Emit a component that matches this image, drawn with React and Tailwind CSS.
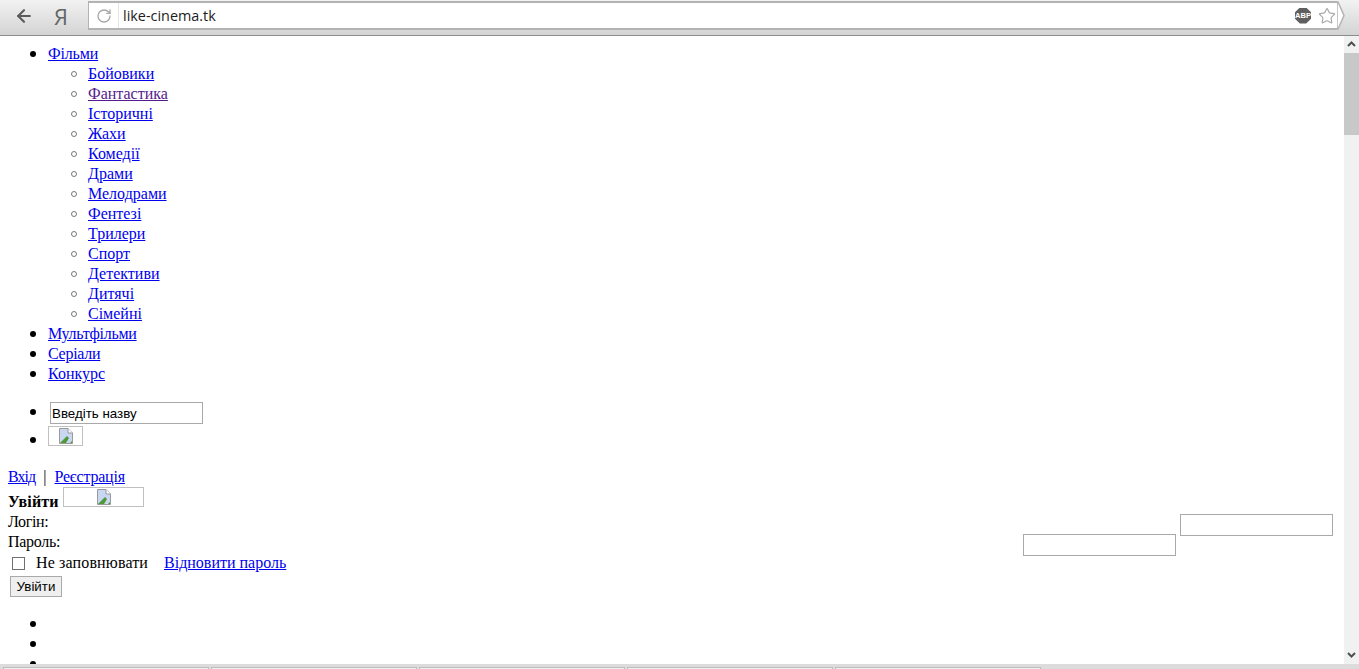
import { ArrowLeft, RotateCw, Star } from "lucide-react";

const genres = ["Бойовики", "Фантастика", "Історичні", "Жахи", "Комедії", "Драми", "Мелодрами", "Фентезі", "Трилери", "Спорт", "Детективи", "Дитячі", "Сімейні"];

const disc = "relative list-none before:absolute before:left-[-18px] before:top-[7px] before:w-[6px] before:h-[6px] before:rounded-full before:bg-black";
const circle = "relative list-none before:absolute before:left-[-17px] before:top-[7px] before:w-[6px] before:h-[6px] before:rounded-full before:border before:border-[#777]";

function BrokenImage() {
  return (
    <svg width="16" height="16" viewBox="0 0 16 16" className="block">
      <path d="M1.5 .5H10L14.5 5V15.5H1.5Z" fill="#c9d7f3" stroke="#9a9a9a" />
      <path d="M10 .5V5H14.5" fill="#fff" stroke="#9a9a9a" />
      <path d="M2 15L9 8L11 10L8 15Z" fill="#4f9a37" />
      <path d="M12 15L14 13V15Z" fill="#4f9a37" />
    </svg>
  );
}

function Link({ children, className = "text-[#0000ee]" }) {
  return <a href="#" className={`underline ${className}`}>{children}</a>;
}

function Toolbar() {
  return (
    <div className="h-9 shrink-0 flex items-start pt-[1px] bg-gradient-to-b from-[#f2f2f2] to-[#d4d4d4] border-b border-[#8c8c8c]">
      <ArrowLeft className="ml-[14px] mt-[5px] w-[20px] h-[20px] text-[#5c5c5c]" strokeWidth={2.6} />
      <span className="ml-[20px] mt-[3px] w-[12px] font-['Open_Sans',sans-serif] text-[22px] leading-[24px] text-[#666]">Я</span>
      <div className="ml-[22px] w-[1249px] h-[29px] flex items-center bg-white border-y-2 border-[#b3b3b3] border-l">
        <div className="w-[30px] h-full flex items-center justify-center border-r border-[#e4e4e4]">
          <RotateCw className="w-[16px] h-[16px] text-[#a8a8a8]" strokeWidth={2} />
        </div>
        <span className="ml-[4px] font-['Open_Sans',sans-serif] text-[14.4px] text-[#1c1c1c]">like-cinema.tk</span>
        <div className="ml-auto mr-[1px] flex items-center gap-[7px]">
          <span className="w-[16px] h-[16px] [clip-path:polygon(30%_0,70%_0,100%_30%,100%_70%,70%_100%,30%_100%,0_70%,0_30%)] bg-[#5f5f5f] text-white text-[7.5px] font-bold text-center leading-[16px] font-['Liberation_Sans',sans-serif]">ABP</span>
          <Star className="w-[18px] h-[18px] text-[#a9a9a9]" strokeWidth={1.6} />
        </div>
      </div>
      <svg width="8" height="29" viewBox="0 0 8 29" className="block">
        <path d="M0 1H1L7 14.5L1 28H0Z" fill="#fff" stroke="#b3b3b3" strokeWidth="1.5" />
      </svg>
    </div>
  );
}

function Scrollbar() {
  return (
    <div className="w-[15px] shrink-0 flex flex-col items-center bg-[#f1f1f1] text-[#505050]">
      <svg width="15" height="17" viewBox="0 0 15 17"><path d="M4 10L7.5 6.5L11 10" fill="none" stroke="currentColor" strokeWidth="2" /></svg>
      <div className="w-full h-[82px] bg-[#c8c8c8]" />
      <svg width="15" height="17" viewBox="0 0 15 17" className="mt-auto"><path d="M4 6L7.5 9.5L11 6" fill="none" stroke="currentColor" strokeWidth="2" /></svg>
    </div>
  );
}

function Tabs() {
  return (
    <div className="h-[5px] shrink-0 flex gap-[2px] pt-[3px] pl-[3px] bg-[#dcdcdc] overflow-hidden">
      {[0, 1, 2, 3, 4].map((i) => (
        <div key={i} className="w-[206px] h-[8px] border border-[#bdbdbd] bg-[#efefef]" />
      ))}
    </div>
  );
}

export default function App() {
  return (
    <div className="h-[669px] flex flex-col overflow-hidden bg-white text-black text-[16px] leading-[20px] font-['Liberation_Serif',serif]">
      <Toolbar />
      <div className="flex-1 min-h-0 flex">
        <div className="flex-1 min-w-0 overflow-hidden pt-[8px] px-[8px]">
          <ul className="pl-[40px]">
            <li className={disc}>
              <Link className="text-[#0000ee] tracking-[-0.15px]">Фільми</Link>
              <ul className="pl-[40px]">
                {genres.map((g) => (
                  <li key={g} className={circle}>
                    <Link className={g === "Фантастика" ? "text-[#551a8b]" : "text-[#0000ee]"}>{g}</Link>
                  </li>
                ))}
              </ul>
            </li>
            <li className={disc}><Link className="text-[#0000ee] tracking-[-0.27px]">Мультфільми</Link></li>
            <li className={disc}><Link className="text-[#0000ee] tracking-[-0.28px]">Серіали</Link></li>
            <li className={disc}><Link>Конкурс</Link></li>
          </ul>
          <ul className="pl-[40px] mt-[18px]">
            <li className={`${disc} h-[24px]`}>
              <input readOnly value="Введіть назву" className="ml-[2px] w-[153px] h-[22px] px-[1px] border border-[#a9a9a9] text-[13.33px] font-['Liberation_Sans',sans-serif] align-top" />
            </li>
            <li className={`${disc} h-[20px] before:top-[11px]`}>
              <span className="inline-flex justify-center w-[35px] h-[20px] pt-[1px] border border-[#c0c0c0] align-top"><BrokenImage /></span>
            </li>
          </ul>
          <div className="mt-[21px]">
            <Link className="text-[#0000ee] tracking-[-0.95px]">Вхід</Link>
            <span className="mx-[8px]">|</span>
            <Link className="text-[#0000ee] tracking-[-0.2px]">Реєстрація</Link>
          </div>
          <div className="flex items-start h-[25px]">
            <b className="mt-[5px] tracking-[0.15px]">Увійти</b>
            <span className="ml-[4px] inline-flex justify-center w-[81px] h-[20px] pt-[1px] pl-[2px] border border-[#c0c0c0]"><BrokenImage /></span>
          </div>
          <div className="relative h-[20px]">
            <span className="tracking-[-0.35px]">Логін:</span>
            <input readOnly className="absolute left-[1172px] top-[2px] w-[153px] h-[22px] border border-[#a9a9a9]" />
          </div>
          <div className="relative h-[20px]">
            <span className="tracking-[-0.3px]">Пароль:</span>
            <input readOnly className="absolute left-[1015px] top-[2px] w-[153px] h-[22px] border border-[#a9a9a9]" />
          </div>
          <div className="flex items-center h-[20px] mt-[1px]">
            <span className="ml-[4px] w-[13px] h-[13px] border border-[#707070]" />
            <span className="ml-[11px] tracking-[0.14px]">Не заповнювати</span>
            <Link className="ml-[16px] text-[#0000ee]">Відновити пароль</Link>
          </div>
          <button className="block ml-[2px] mt-[3px] w-[52px] h-[21px] border border-[#a9a9a9] bg-[#efefef] text-[13.33px] leading-none font-['Liberation_Sans',sans-serif]">Увійти</button>
          <ul className="pl-[40px] mt-[17px]">
            <li className={`${disc} h-[20px]`}></li>
            <li className={`${disc} h-[20px]`}></li>
            <li className={`${disc} h-[20px]`}></li>
          </ul>
        </div>
        <Scrollbar />
      </div>
      <Tabs />
    </div>
  );
}
